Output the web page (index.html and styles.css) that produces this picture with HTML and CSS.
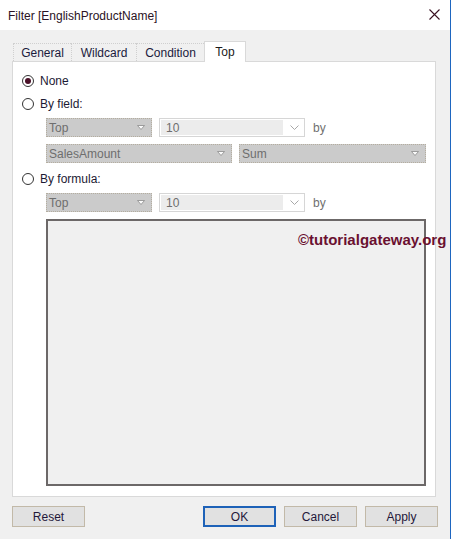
FILE: index.html
```html
<!DOCTYPE html>
<html>
<head>
<meta charset="utf-8">
<link rel="stylesheet" href="styles.css">
</head>
<body>
<div class="window">
  <div class="titlebar">
    <span class="title">Filter [EnglishProductName]</span>
    <svg class="close" width="11" height="11" viewBox="0 0 11 11"><path d="M0.5 0.5 L10.5 10.5 M10.5 0.5 L0.5 10.5" stroke="#3a1020" stroke-width="1.1" fill="none"/></svg>
  </div>
  <div class="body">
    <div class="tabs">
      <div class="tab t-general">General</div>
      <div class="tab t-wild">Wildcard</div>
      <div class="tab t-cond">Condition</div>
      <div class="tab t-top active">Top</div>
    </div>
    <div class="panel">
      <label class="radio-row r-none"><span class="radio checked"></span><span>None</span></label>
      <label class="radio-row r-field"><span class="radio"></span><span>By field:</span></label>
      <div class="combo-row c1">
        <div class="dd w-top"><span>Top</span><svg class="tri" width="8" height="5" viewBox="0 0 8 5"><path d="M0.5 0.5 L7.5 0.5 L4 4.5 Z" fill="#fafafa" stroke="#8a8a8a" stroke-width="0.8"/></svg></div>
        <div class="cb"><span class="cb-field">10</span><svg class="chev" width="9" height="5" viewBox="0 0 9 5"><path d="M0.5 0.5 L4.5 4.5 L8.5 0.5" stroke="#a8a8a8" fill="none"/></svg></div>
        <span class="by">by</span>
      </div>
      <div class="combo-row c2">
        <div class="dd w-sales"><span>SalesAmount</span><svg class="tri" width="8" height="5" viewBox="0 0 8 5"><path d="M0.5 0.5 L7.5 0.5 L4 4.5 Z" fill="#fafafa" stroke="#8a8a8a" stroke-width="0.8"/></svg></div>
        <div class="dd w-sum"><span>Sum</span><svg class="tri" width="8" height="5" viewBox="0 0 8 5"><path d="M0.5 0.5 L7.5 0.5 L4 4.5 Z" fill="#fafafa" stroke="#8a8a8a" stroke-width="0.8"/></svg></div>
      </div>
      <label class="radio-row r-formula"><span class="radio"></span><span>By formula:</span></label>
      <div class="combo-row c3">
        <div class="dd w-top"><span>Top</span><svg class="tri" width="8" height="5" viewBox="0 0 8 5"><path d="M0.5 0.5 L7.5 0.5 L4 4.5 Z" fill="#fafafa" stroke="#8a8a8a" stroke-width="0.8"/></svg></div>
        <div class="cb"><span class="cb-field">10</span><svg class="chev" width="9" height="5" viewBox="0 0 9 5"><path d="M0.5 0.5 L4.5 4.5 L8.5 0.5" stroke="#a8a8a8" fill="none"/></svg></div>
        <span class="by">by</span>
      </div>
      <div class="textarea"></div>
      <div class="watermark">©tutorialgateway.org</div>
    </div>
    <div class="buttons">
      <button class="btn">Reset</button>
      <div class="spacer"></div>
      <button class="btn default">OK</button>
      <button class="btn">Cancel</button>
      <button class="btn">Apply</button>
    </div>
  </div>
</div>
</body>
</html>
```
FILE: styles.css
```css
html, body {
  margin: 0;
  padding: 0;
  width: 451px;
  height: 539px;
  overflow: hidden;
  background: #f0f0f0;
  font-family: "Liberation Sans", Arial, sans-serif;
  font-size: 12px;
}
.window {
  width: 450px;
  height: 539px;
  border-right: 1px solid #1e66c0;
  display: flex;
  flex-direction: column;
  background: #f0f0f0;
}
.titlebar {
  height: 30px;
  background: #ffffff;
  display: flex;
  align-items: center;
  padding-left: 8px;
  position: relative;
}
.title {
  color: #2a1224;
  font-size: 12px;
  margin-top: 1px;
}
.close {
  position: absolute;
  left: 429px;
  top: 9px;
}
.body {
  flex: 1;
  display: flex;
  flex-direction: column;
  padding: 11px 0 0 12px;
}
.tabs {
  display: flex;
  align-items: flex-end;
  height: 20px;
  padding-left: 1px;
  position: relative;
  z-index: 1;
}
.tab {
  height: 18px;
  border: 1px dotted #cfcfcf;
  border-bottom: none;
  border-right: none;
  box-sizing: border-box;
  display: flex;
  align-items: center;
  justify-content: center;
  color: #1a1a3c;
  background: #f0f0f0;
  padding-top: 1px;
}
.t-general { width: 58px; }
.t-wild { width: 65px; }
.t-cond { width: 68px; }
.tab.active {
  width: 42px;
  height: 21px;
  background: #ffffff;
  border: 1px solid #d9d9d9;
  border-bottom: none;
  margin-bottom: -1px;
  color: #1a1a1a;
  padding-top: 0;
}
.panel {
  width: 424px;
  height: 436px;
  box-sizing: border-box;
  border: 1px solid #d9d9d9;
  background: #ffffff;
  display: flex;
  flex-direction: column;
  padding: 12px 0 0 9px;
  position: relative;
}
.radio-row {
  display: flex;
  align-items: center;
  height: 14px;
  gap: 6px;
  color: #1c1a34;
}
.r-field { margin-top: 9px; }
.r-formula { margin-top: 9px; }
.radio {
  width: 12px;
  height: 12px;
  box-sizing: border-box;
  border: 1px solid #333333;
  border-radius: 50%;
  display: flex;
  align-items: center;
  justify-content: center;
  background: #fff;
}
.radio.checked::after {
  content: "";
  width: 6px;
  height: 6px;
  border-radius: 50%;
  background: #4a1028;
}
.combo-row {
  display: flex;
  align-items: center;
  height: 19px;
  margin-left: 24px;
  margin-top: 7px;
  gap: 7px;
}
.dd {
  height: 19px;
  box-sizing: border-box;
  background: #cbcbcb;
  border: 1px dotted #b4ad9f;
  display: flex;
  align-items: center;
  justify-content: space-between;
  padding: 0 6px 0 2px;
  color: #6e6e6e;
}
.w-top { width: 106px; }
.w-sales { width: 186px; }
.w-sum { width: 187px; }
.tri { display: block; }
.cb {
  width: 146px;
  height: 19px;
  box-sizing: border-box;
  border: 1px solid #d6d6d6;
  background: #ffffff;
  display: flex;
  align-items: center;
  padding: 1px 5px 1px 1px;
  gap: 7px;
}
.cb-field {
  flex: 1;
  height: 15px;
  background: #ececec;
  color: #6e6e6e;
  display: flex;
  align-items: center;
  padding-left: 5px;
}
.chev { display: block; }
.by {
  margin-left: 1px;
  color: #707070;
}
.textarea {
  margin-left: 24px;
  margin-top: 7px;
  width: 380px;
  height: 267px;
  box-sizing: border-box;
  border: 2px solid #6c6868;
  background: #f0f0f0;
}
.watermark {
  position: absolute;
  left: 285px;
  top: 169px;
  font-family: "Liberation Sans", Arial, sans-serif;
  font-weight: bold;
  font-size: 15px;
  color: #6a1030;
  white-space: nowrap;
}
.buttons {
  display: flex;
  margin-top: 9px;
  width: 426px;
  gap: 8px;
}
.spacer { flex: 1; }
.btn {
  width: 73px;
  height: 21px;
  box-sizing: border-box;
  border: 1px solid #c2b9a8;
  background: #e1e1e1;
  font-family: "Liberation Sans", Arial, sans-serif;
  font-size: 12px;
  color: #24183a;
  padding: 0;
  margin: 0;
}
.btn.default {
  border: 2px solid #1e62b8;
}
```
